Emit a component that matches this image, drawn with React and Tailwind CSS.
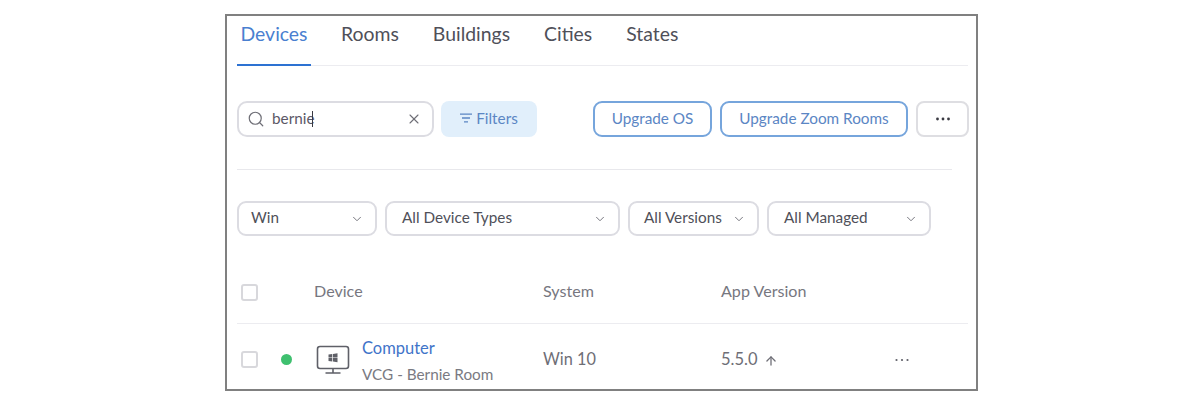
import { Search, X, ChevronDown, ArrowUp } from 'lucide-react';

const TABS = ['Rooms', 'Buildings', 'Cities', 'States'];
const FILTERS = [
  { label: 'Win', box: 'w-[140px] pl-[12px]' },
  { label: 'All Device Types', box: 'w-[235px] pl-[15px]' },
  { label: 'All Versions', box: 'w-[131px] pl-[14px]' },
  { label: 'All Managed', box: 'w-[164px] pl-[15px]' },
];

function Dots({ className, r = 1.4 }) {
  return (
    <svg width="16" height="4" viewBox="0 0 16 4" className={className}>
      <circle cx="2.5" cy="2" r={r} fill="currentColor" />
      <circle cx="8" cy="2" r={r} fill="currentColor" />
      <circle cx="13.5" cy="2" r={r} fill="currentColor" />
    </svg>
  );
}

function MonitorIcon() {
  return (
    <svg width="34" height="30" viewBox="0 0 34 30" fill="none" className="shrink-0">
      <rect x="1.5" y="1.5" width="31" height="22" rx="2.5" stroke="#5f6068" strokeWidth="1.6" />
      <path d="M17 24v3.5M9.5 28h15" stroke="#5f6068" strokeWidth="1.6" />
      <path d="M12.5 9.6l3.8-.6v3.4h-3.8zM17 8.9l4.5-.7v4.2H17zM12.5 13.1h3.8v3.4l-3.8-.6zM17 13.1h4.5v4.2l-4.5-.7z" fill="#5f6068" />
    </svg>
  );
}

export default function App() {
  return (
    <div className="h-[414px] w-[1200px] bg-white pl-[225px] pt-[14px] font-['Lato',sans-serif] text-[#4f5059]">
      <div className="h-[377px] w-[753px] overflow-hidden border-2 border-[#808080] pl-[10px]">
        {/* Tabs */}
        <div className="flex h-[50px] w-[731px] border-b border-[#ececf0] text-[19.4px]">
          <div className="-mb-px flex h-[50px] w-[74px] justify-center border-b-2 border-[#2d72d2] pt-[3px] text-[#4a7fd0]">
            Devices
          </div>
          {TABS.map((t, i) => (
            <div key={t} className={i === 0 ? 'ml-[30px] pt-[3px]' : 'ml-[34px] pt-[3px]'}>{t}</div>
          ))}
        </div>

        {/* Search and actions */}
        <div className="mt-[35px] flex h-[36px] items-stretch">
          <div className="flex w-[197px] items-center rounded-[10px] border-2 border-[#dcdce2] pl-[8px] pr-[10px]">
            <Search size={18} strokeWidth={1.6} className="text-[#6e6e76]" />
            <span className="ml-[7px] pb-[2px] text-[15.3px] text-[#5c5866]">bernie</span>
            <span className="-ml-[3px] h-[16px] w-px bg-[#3a3a42]" />
            <span className="flex-1" />
            <X size={16} strokeWidth={1.6} className="text-[#6e6e76]" />
          </div>
          <div className="ml-[7px] flex w-[96px] items-center justify-center gap-[4px] rounded-[8px] bg-[#e1effb] pb-[2px] text-[15.3px] text-[#5b86c4]">
            <svg width="12" height="10" viewBox="0 0 12 10" fill="none" stroke="#5b86c4" strokeWidth="1.3">
              <path d="M0 1.2h12M2 5h8M4 8.8h4" />
            </svg>
            Filters
          </div>
          <div className="ml-[56px] flex w-[119px] items-center justify-center rounded-[9px] border-2 border-[#76a5dc] pb-[2px] text-[15.3px] text-[#5b86c4]">
            Upgrade OS
          </div>
          <div className="ml-[8px] flex w-[188px] items-center justify-center rounded-[9px] border-2 border-[#76a5dc] pb-[2px] text-[15.3px] text-[#5b86c4]">
            Upgrade Zoom Rooms
          </div>
          <div className="ml-[8px] flex w-[53px] items-center justify-center rounded-[8px] border-2 border-[#dedee2] text-[#3a3a42]">
            <Dots />
          </div>
        </div>

        <div className="mt-[32px] h-px w-[715px] bg-[#e8e8ec]" />

        {/* Filter selects */}
        <div className="mt-[31px] flex h-[35px] gap-[8px]">
          {FILTERS.map(f => (
            <div key={f.label} className={`flex items-center justify-between rounded-[9px] border-2 border-[#dcdce2] pb-[2px] pr-[11px] text-[15.3px] ${f.box}`}>
              {f.label}
              <ChevronDown size={14} strokeWidth={1.6} className="mt-[2px] text-[#6e6e76]" />
            </div>
          ))}
        </div>

        {/* Table header */}
        <div className="mt-[44px] flex h-[24px] items-center text-[16.1px] text-[#77777f]">
          <span className="ml-[4px] size-[17px] rounded-[3px] border-2 border-[#d8d8dc]" />
          <span className="-mt-[2px] ml-[56px] w-[229px]">Device</span>
          <span className="-mt-[2px] w-[178px]">System</span>
          <span className="-mt-[2px]">App Version</span>
        </div>
        <div className="mt-[19px] h-px w-[731px] bg-[#ececf0]" />

        {/* Row */}
        <div className="mt-[11px] flex items-center">
          <span className="ml-[4px] size-[17px] shrink-0 rounded-[3px] border-2 border-[#d8d8dc]" />
          <span className="ml-[23px] size-[11px] shrink-0 rounded-full bg-[#3fc06f]" />
          <span className="ml-[24px]"><MonitorIcon /></span>
          <div className="ml-[12px] w-[181px] pt-[2px]">
            <div className="text-[16.5px] leading-[22px] text-[#3f74c9]">Computer</div>
            <div className="mt-[5px] text-[15.3px] leading-[20px] text-[#7a7a82]">VCG - Bernie Room</div>
          </div>
          <span className="w-[178px] text-[16.3px] text-[#6e6e76]">Win 10</span>
          <span className="flex w-[173px] items-center gap-[6px] text-[16.5px] text-[#6e6e76]">
            5.5.0
            <ArrowUp size={14} strokeWidth={2.2} className="mt-[2px]" />
          </span>
          <Dots r={1.1} className="text-[#5f6068]" />
        </div>
      </div>
    </div>
  );
}
